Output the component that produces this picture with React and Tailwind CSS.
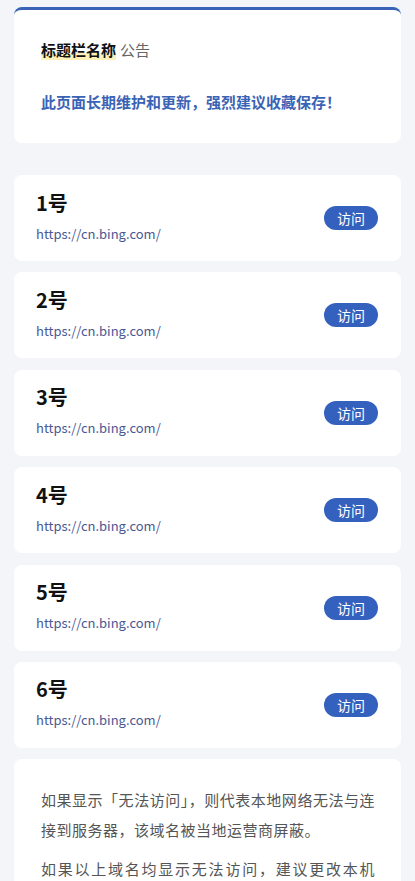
import React from 'react';

const sites = [
  { name: '1号', url: 'https://cn.bing.com/' },
  { name: '2号', url: 'https://cn.bing.com/' },
  { name: '3号', url: 'https://cn.bing.com/' },
  { name: '4号', url: 'https://cn.bing.com/' },
  { name: '5号', url: 'https://cn.bing.com/' },
  { name: '6号', url: 'https://cn.bing.com/' },
];

const font = { fontFamily: '"Noto Sans CJK SC", "Noto Sans", sans-serif' };

const SiteCard = ({ site }) => (
  <div className="h-[86px] mb-[11.4px] bg-white rounded-lg pl-[22px] pr-[23px] flex items-center justify-between">
    <div className="flex flex-col pb-[4px]">
      <span className="text-[20px] leading-[28px] font-bold text-[#111]">{site.name}</span>
      <span className="mt-[7px] text-[13px] leading-[20px] text-[#4a5894]">{site.url}</span>
    </div>
    <button className="w-[54px] h-[24px] rounded-full bg-[#3561be] text-white text-[14px] leading-[24px]">
      访问
    </button>
  </div>
);

export default function App() {
  return (
    <div className="min-h-screen bg-[#f3f5f9] px-[14px] pt-[7px] pb-6" style={font}>
      {/* 公告栏 */}
      <div className="bg-white rounded-lg border-t-[3px] border-[#3a63b8] pl-[27px] pr-4 pt-[30px] pb-[31px]">
        <div className="text-[15px] leading-[20px]">
          <span className="font-bold text-[#111] bg-[linear-gradient(transparent_65%,#fdf1b8_65%)]">标题栏名称</span>
          <span className="ml-1 text-[#666]">公告</span>
        </div>
        <p className="mt-[32px] text-[15px] leading-[20px] font-bold text-[#3b63b5]">
          此页面长期维护和更新，强烈建议收藏保存！
        </p>
      </div>

      {/* 域名列表 */}
      <div className="mt-[32px]">
        {sites.map((site) => (
          <SiteCard key={site.name} site={site} />
        ))}
      </div>

      {/* 说明 */}
      <div className="bg-white rounded-lg pl-[27px] pr-[26px] pt-[26px] pb-6 text-[15px] leading-[30px] tracking-[0.5px] text-[#555] text-justify">
        <p>如果显示「无法访问」，则代表本地网络无法与连接到服务器，该域名被当地运营商屏蔽。</p>
        <p className="mt-[9px]">如果以上域名均显示无法访问，建议更改本机DNS为114.114.114.114后再试。</p>
      </div>
    </div>
  );
}
